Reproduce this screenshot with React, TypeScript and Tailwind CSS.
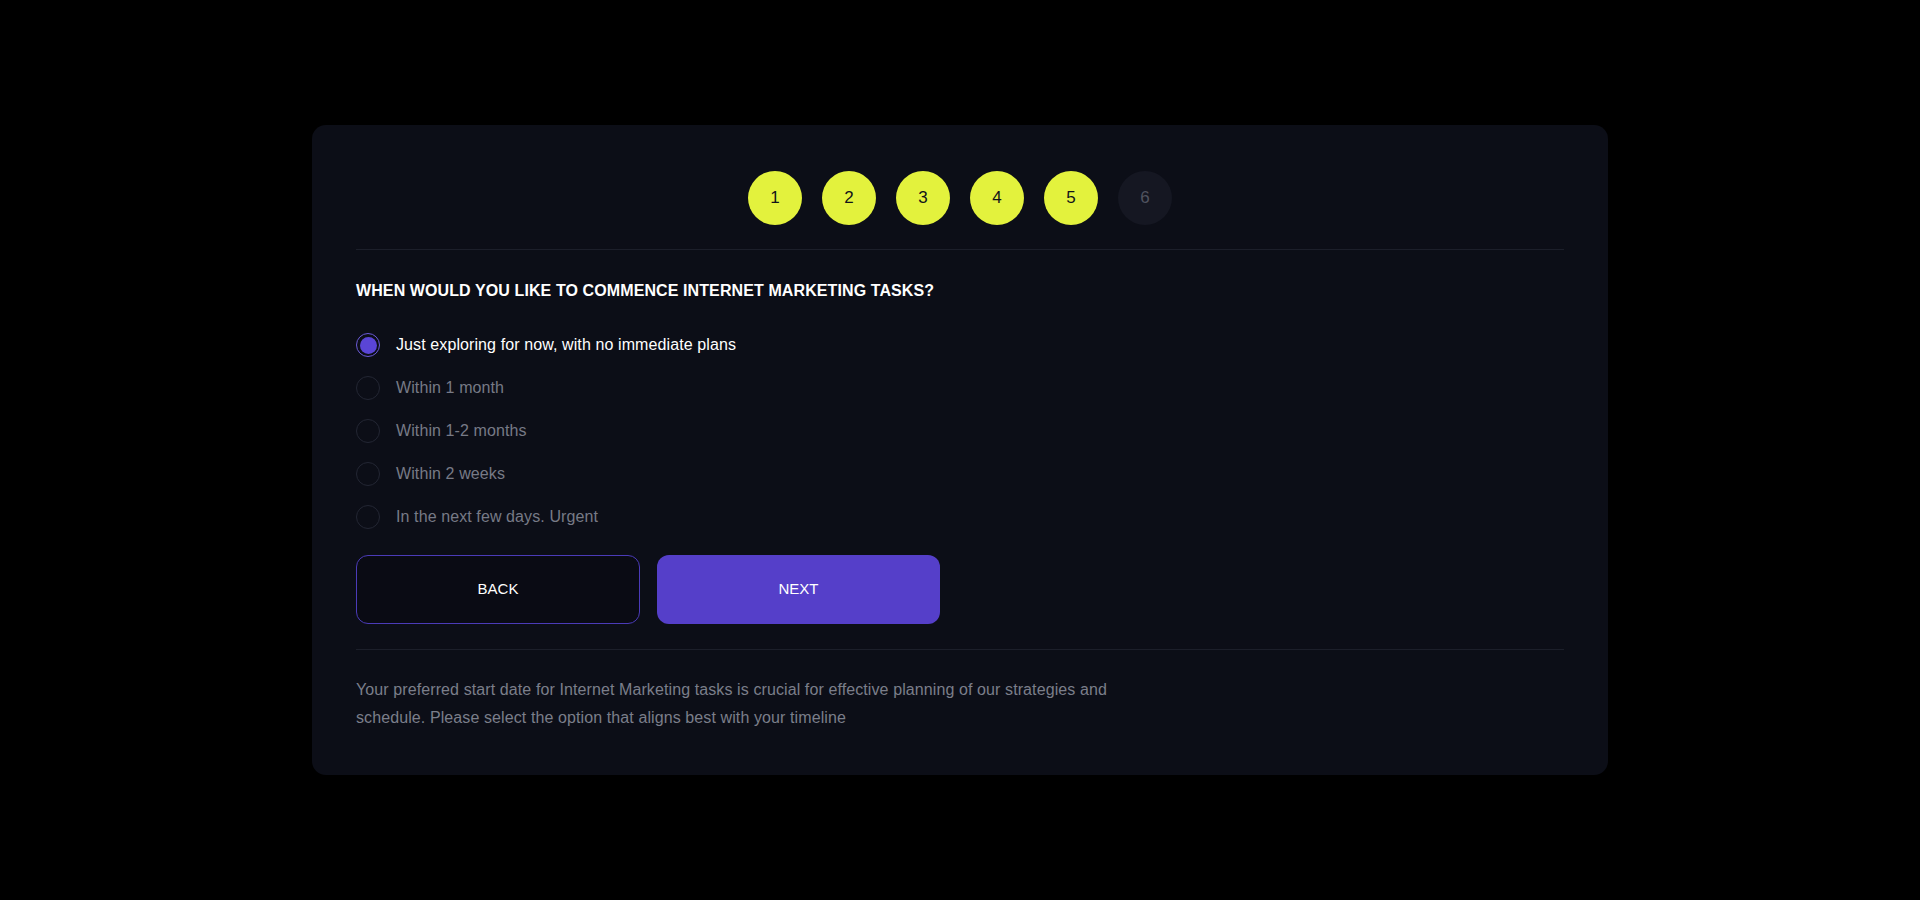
import React, { useState } from "react";

const OPTIONS = [
  "Just exploring for now, with no immediate plans",
  "Within 1 month",
  "Within 1-2 months",
  "Within 2 weeks",
  "In the next few days. Urgent",
];

const STEPS = [1, 2, 3, 4, 5, 6];

export default function App() {
  const [selected, setSelected] = useState(0);
  const current = 6;

  return (
    <div
      className="min-h-screen w-full bg-black flex justify-center pt-[125px]"
      style={{ fontFamily: '"Liberation Sans", Arial, Helvetica, sans-serif' }}
    >
      <div className="w-[1296px] self-start bg-[#0c0e17] rounded-[14px] px-[44px] pt-[46px] pb-[43px] flex flex-col">
        {/* step indicator */}
        <div className="flex justify-center gap-[20px]">
          {STEPS.map((n) => (
            <div
              key={n}
              className={
                n < current
                  ? "w-[54px] h-[54px] rounded-full bg-[#e3f23d] text-[#12131a] flex items-center justify-center text-[17px]"
                  : "w-[54px] h-[54px] rounded-full bg-[#151722] text-[#50535f] flex items-center justify-center text-[17px]"
              }
            >
              {n}
            </div>
          ))}
        </div>

        <div className="shrink-0 border-t border-[#1c1f2a] mt-[24px]" />

        <h2 className="mt-[31px] text-white text-[16px] font-semibold tracking-[0.1px] leading-[20px]">
          WHEN WOULD YOU LIKE TO COMMENCE INTERNET MARKETING TASKS?
        </h2>

        <div className="mt-[32px] flex flex-col gap-[19px]">
          {OPTIONS.map((label, i) => {
            const on = i === selected;
            return (
              <button
                key={label}
                onClick={() => setSelected(i)}
                className="flex items-center gap-[16px] text-left"
              >
                <span
                  className={
                    on
                      ? "w-[24px] h-[24px] rounded-full border border-[#6b5ad8] flex items-center justify-center"
                      : "w-[24px] h-[24px] rounded-full border border-[#232633] flex items-center justify-center"
                  }
                >
                  {on && <span className="w-[17px] h-[17px] rounded-full bg-[#5a45d6]" />}
                </span>
                <span
                  className={
                    on
                      ? "text-[16px] leading-[24px] tracking-[0.1px] text-white"
                      : "text-[16px] leading-[24px] tracking-[0.1px] text-[#777a86]"
                  }
                >
                  {label}
                </span>
              </button>
            );
          })}
        </div>

        <div className="mt-[26px] flex gap-[17px]">
          <button className="w-[284px] h-[69px] rounded-[12px] border border-[#4b3bb8] bg-[#0a0b14] text-white text-[15px] font-medium">
            BACK
          </button>
          <button className="w-[283px] h-[69px] rounded-[12px] bg-[#553fc9] text-white text-[15px] font-medium">
            NEXT
          </button>
        </div>

        <div className="shrink-0 border-t border-[#1c1f2a] mt-[25px]" />

        <p className="mt-[26px] max-w-[780px] text-[16px] leading-[28px] tracking-[0.1px] text-[#7b7e8a]">
          Your preferred start date for Internet Marketing tasks is crucial for effective planning of our
          strategies and schedule. Please select the option that aligns best with your timeline
        </p>
      </div>
    </div>
  );
}
